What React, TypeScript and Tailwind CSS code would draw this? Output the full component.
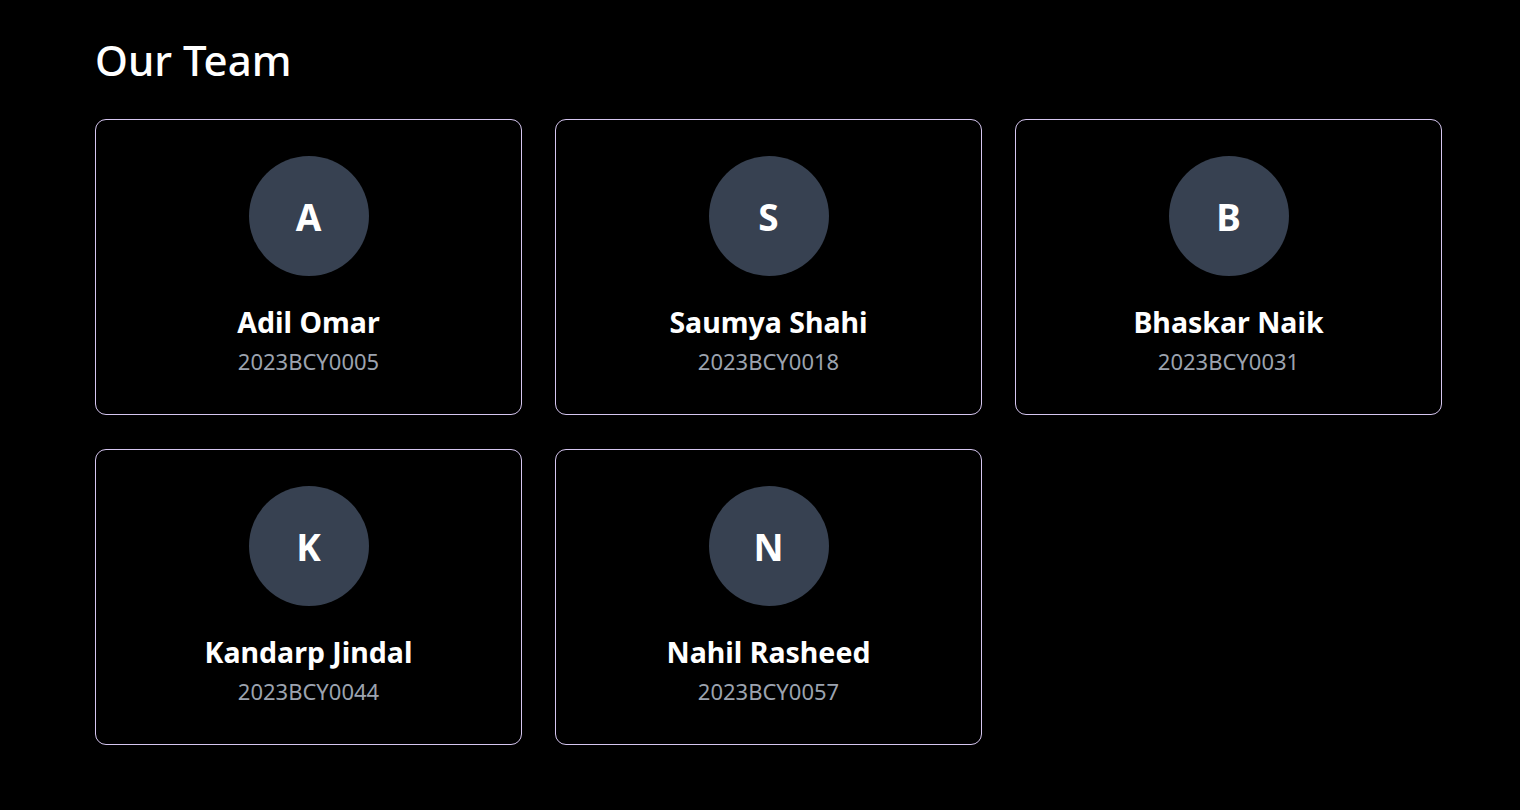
const team = [
  { name: "Adil Omar", id: "2023BCY0005" },
  { name: "Saumya Shahi", id: "2023BCY0018" },
  { name: "Bhaskar Naik", id: "2023BCY0031" },
  { name: "Kandarp Jindal", id: "2023BCY0044" },
  { name: "Nahil Rasheed", id: "2023BCY0057" },
];

const MemberCard = ({ name, id }: { name: string; id: string }) => {
  return (
    <div className="flex h-[296px] flex-col items-center rounded-[11px] border border-[#d5c6f0] pt-[36px]">
      <div className="flex h-[120px] w-[120px] items-center justify-center rounded-full bg-[#374151]">
        <span className="text-[37px] font-bold leading-none text-white">
          {name[0]}
        </span>
      </div>
      <h3 className="mt-[28px] text-[28.5px] font-bold leading-[36px] text-white">
        {name}
      </h3>
      <p className="mt-[7px] text-[22px] leading-[28px] text-[#9ca3af]">{id}</p>
    </div>
  );
};

export default function App() {
  return (
    <div
      className="min-h-[810px] w-full bg-black pl-[95px] pt-[34px]"
      style={{ fontFamily: '"Noto Sans", "Open Sans", sans-serif' }}
    >
      <h1 className="text-[42px] font-medium leading-[52px] text-white">Our Team</h1>
      <div className="mt-[33px] grid w-[1347px] grid-cols-3 gap-x-[33px] gap-y-[34px]">
        {team.map((m) => (
          <MemberCard key={m.id} name={m.name} id={m.id} />
        ))}
      </div>
    </div>
  );
}
